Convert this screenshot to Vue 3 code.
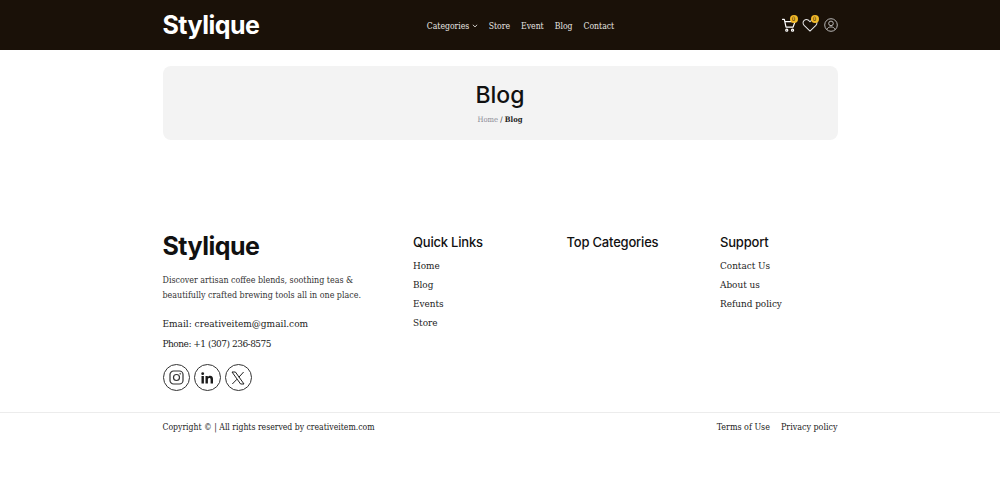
<template>
  <div class="page">
    <header class="topbar">
      <div class="wrap topbar-inner">
        <a class="logo logo-light">Stylique</a>
        <nav class="main-nav">
          <a class="has-caret">Categories
            <svg width="6" height="4" viewBox="0 0 7 5" fill="none" stroke="currentColor" stroke-width="1.1"><path d="M0.8 1l2.7 2.6L6.2 1" /></svg>
          </a>
          <a v-for="item in navItems" :key="item">{{ item }}</a>
        </nav>
        <div class="actions">
          <span class="action">
            <svg width="14" height="14" viewBox="0.500 0.500 15 15" fill="none" stroke="#fff" stroke-width="1.300" stroke-linecap="round" stroke-linejoin="round">
              <path d="M1 2h2l1.800 8.200h7.600L14.500 4.400H3.600" />
              <circle cx="5.600" cy="13.600" r="1.100" />
              <circle cx="11.800" cy="13.600" r="1.100" />
            </svg>
            <span class="badge">0</span>
          </span>
          <span class="action">
            <svg width="16" height="14" viewBox="0 0 17 15" fill="none" stroke="#e8e8e8" stroke-width="1.100" stroke-linejoin="round">
              <path d="M8.500 14L2.200 8C.6 6.300.7 3.800 2.300 2.500c1.700-1.300 4.300-.9 6.200 1.500 1.900-2.400 4.500-2.800 6.200-1.500 1.600 1.300 1.700 3.800.1 5.500z" />
            </svg>
            <span class="badge heart-badge">0</span>
          </span>
          <span class="action">
            <svg width="14" height="14" viewBox="0 0 14 14" fill="none" stroke="#c8c8c8" stroke-width="0.900">
              <circle cx="7" cy="7" r="6.300" />
              <circle cx="7" cy="5.400" r="2.300" />
              <path d="M2.800 11.600c.9-1.900 2.300-2.700 4.200-2.700s3.300.8 4.200 2.700" />
            </svg>
          </span>
        </div>
      </div>
    </header>

    <main class="wrap">
      <section class="hero">
        <h1>Blog</h1>
        <p class="crumbs"><span>Home</span> / <b>Blog</b></p>
      </section>
    </main>

    <footer class="footer">
      <div class="wrap footer-cols">
        <div class="about">
          <a class="logo">Stylique</a>
          <p class="intro">Discover artisan coffee blends, soothing teas &amp; beautifully crafted brewing tools all in one place.</p>
          <p class="contact">Email: creativeitem@gmail.com</p>
          <p class="contact phone">Phone: +1 (307) 236-8575</p>
          <div class="socials">
            <a class="social">
              <svg width="15" height="15" viewBox="0 0 15 15" fill="none" stroke="#333" stroke-width="1.200">
                <rect x="1" y="1" width="13" height="13" rx="3.600" />
                <circle cx="7.500" cy="7.500" r="3" />
                <circle cx="11.200" cy="3.800" r="0.500" fill="#333" stroke-width="0.500" />
              </svg>
            </a>
            <a class="social">
              <svg width="12" height="12" viewBox="0 0 12 12" fill="#1a1a1a">
                <rect x="0.500" y="4" width="2.400" height="7.500" />
                <circle cx="1.700" cy="1.700" r="1.400" />
                <path d="M4.500 4h2.300v1.100c.4-.7 1.200-1.300 2.400-1.300 2 0 2.800 1.300 2.800 3.300v4.400H9.600V7.600c0-1-.3-1.700-1.200-1.700-1 0-1.500.7-1.500 1.700v3.900H4.500z" />
              </svg>
            </a>
            <a class="social">
              <svg width="14" height="14" viewBox="0 0 14 14" fill="none" stroke="#222" stroke-width="1" stroke-linejoin="round">
                <path d="M1 1h3.400l8.600 12H9.600z" />
                <path d="M12.600 1L7.900 6.200M6 8.200L1.300 13" />
              </svg>
            </a>
          </div>
        </div>
        <div v-for="col in linkCols" :key="col.title" class="link-col">
          <h3>{{ col.title }}</h3>
          <a v-for="link in col.links" :key="link">{{ link }}</a>
        </div>
      </div>
      <div class="bottom">
        <div class="wrap bottom-inner">
          <span>Copyright © | All rights reserved by creativeitem.com</span>
          <div class="legal">
            <a>Terms of Use</a>
            <a>Privacy policy</a>
          </div>
        </div>
      </div>
    </footer>
  </div>
</template>

<script setup>
const navItems = ['Store', 'Event', 'Blog', 'Contact']

const linkCols = [
  { title: 'Quick Links', links: ['Home', 'Blog', 'Events', 'Store'] },
  { title: 'Top Categories', links: [] },
  { title: 'Support', links: ['Contact Us', 'About us', 'Refund policy'] }
]
</script>

<style>
html,
body {
  margin: 0;
  background: #fff;
}
</style>

<style scoped>
.page {
  min-height: 493px;
  font-family: "DejaVu Serif Condensed", "DejaVu Serif", serif;
  font-stretch: condensed;
  color: #222;
  overflow: hidden;
}

.wrap {
  width: 675px;
  margin: 0 auto;
}

.topbar {
  height: 50px;
  background: #1a1108;
}

.topbar-inner {
  display: flex;
  justify-content: space-between;
  align-items: center;
  height: 50px;
}

.logo {
  font-family: Inter, sans-serif;
  font-size: 25px;
  font-weight: 700;
  line-height: 30px;
  letter-spacing: -0.500px;
  color: #111;
}

.logo-light {
  color: #fff;
}

.main-nav {
  display: flex;
  gap: 11px;
  padding-top: 1px;
  font-size: 8.600px;
  color: #e8e6e3;
}

.has-caret svg {
  vertical-align: 1px;
}

.actions {
  display: flex;
  align-items: center;
  gap: 6px;
}

.action {
  position: relative;
  display: flex;
}

.badge {
  position: absolute;
  top: -3px;
  right: -2px;
  width: 8px;
  height: 8px;
  border-radius: 50%;
  background: #f0b828;
  color: #1a1108;
  font-size: 6px;
  line-height: 8px;
  text-align: center;
}

.heart-badge {
  right: -1px;
}

.hero {
  height: 74px;
  margin-top: 16px;
  padding-top: 14px;
  box-sizing: border-box;
  background: #f3f3f3;
  border-radius: 8px;
  text-align: center;
}

.hero h1 {
  margin: 0;
  font-family: Inter, sans-serif;
  font-size: 23px;
  font-weight: 500;
  line-height: 30px;
  color: #111;
}

.crumbs {
  margin: 3px 0 0;
  font-size: 7.600px;
  line-height: 14px;
  color: #222;
}

.crumbs span {
  color: #8a8a95;
}

.footer {
  margin-top: 91px;
}

.footer-cols {
  display: flex;
}

.about {
  width: 250.500px;
}

.about .logo {
  display: block;
}

.intro {
  margin: 12px 0 0;
  width: 205px;
  font-size: 8.850px;
  line-height: 15px;
  color: #333;
}

.contact {
  margin: 15px 0 0;
  font-size: 10px;
  line-height: 12px;
  color: #222;
}

.contact + .contact {
  margin-top: 8px;
}

.phone {
  letter-spacing: -0.500px;
}

.socials {
  display: flex;
  gap: 4px;
  margin-top: 14px;
}

.social {
  display: flex;
  align-items: center;
  justify-content: center;
  width: 25px;
  height: 25px;
  border: 1px solid #333;
  border-radius: 50%;
}

.link-col {
  width: 153.500px;
  display: flex;
  flex-direction: column;
}

.link-col:last-child {
  width: auto;
}

.link-col h3 {
  margin: 2px 0 5px;
  font-family: Inter, sans-serif;
  font-size: 13px;
  font-weight: 500;
  line-height: 18px;
  letter-spacing: -0.200px;
  color: #111;
}

.link-col a {
  font-size: 9.900px;
  line-height: 19.100px;
  color: #222;
}

.bottom {
  margin-top: 21px;
  border-top: 1px solid #ececec;
}

.bottom-inner {
  display: flex;
  justify-content: space-between;
  padding-top: 8px;
  font-size: 8.600px;
  line-height: 13px;
  color: #222;
}

.legal {
  display: flex;
  gap: 11px;
  font-size: 8.900px;
}
</style>
